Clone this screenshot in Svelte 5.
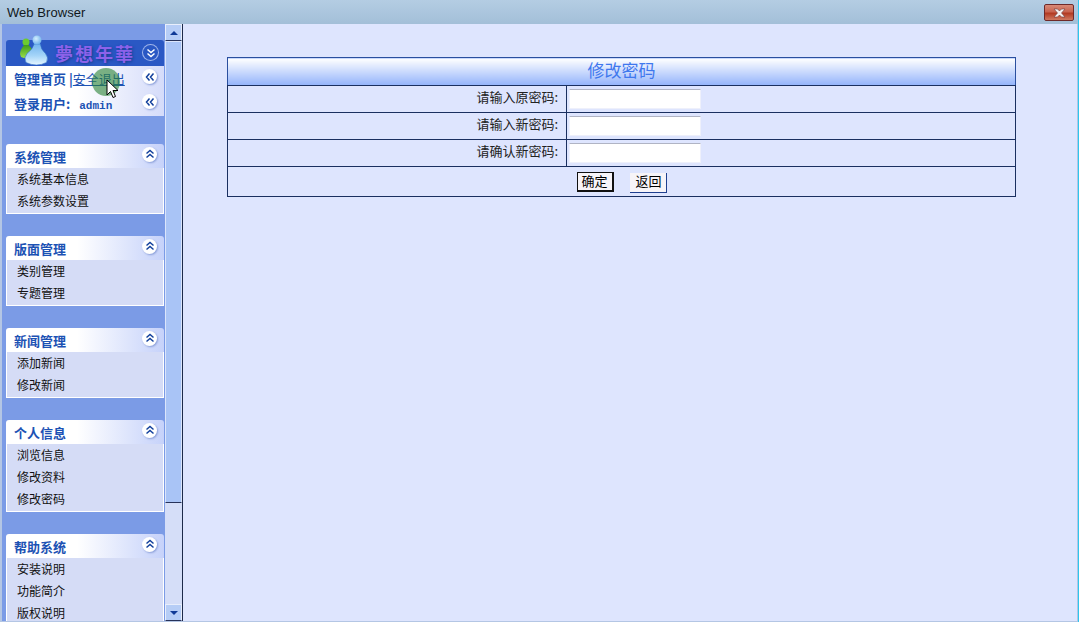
<script lang="ts">
  const groups = [
    { title: '系统管理', items: ['系统基本信息', '系统参数设置'] },
    { title: '版面管理', items: ['类别管理', '专题管理'] },
    { title: '新闻管理', items: ['添加新闻', '修改新闻'] },
    { title: '个人信息', items: ['浏览信息', '修改资料', '修改密码'] },
    { title: '帮助系统', items: ['安装说明', '功能简介', '版权说明'] },
  ]
  const fields = ['请输入原密码:', '请输入新密码:', '请确认新密码:']
</script>

{#snippet chevron(dir: string)}
  <span class="chev">
    <svg width="10" height="10" viewBox="0 0 10 10" fill="none" stroke="#12409c" stroke-width="1.5">
      {#if dir === 'left'}
        <path d="M4.5 1.5 1.5 5l3 3.5M8.5 1.5 5.5 5l3 3.5" />
      {:else if dir === 'up'}
        <path d="M1.5 4.5 5 1.5l3.5 3M1.5 8.5 5 5.5l3.5 3" />
      {/if}
    </svg>
  </span>
{/snippet}

<div class="window">
  <header class="titlebar">
    <span class="title">Web Browser</span>
    <button class="close" aria-label="close">
      <svg width="13" height="10" viewBox="0 0 13 10">
        <path d="M1 1h3.500L6.500 3l2-2H12L8.500 5 12 9H8.500l-2-2-2 2H1l3.500-4z" fill="#f4f0f0" stroke="#6b3a3a" stroke-width=".6" />
      </svg>
    </button>
  </header>

  <div class="body">
    <aside class="sidebar">
      <div class="menu">
        <div class="logo">
          <svg class="msn" width="32" height="32" viewBox="0 0 32 32">
            <defs>
              <linearGradient id="blueman" x1="0" y1="0" x2="0" y2="1">
                <stop offset="0" stop-color="#72b4ee" />
                <stop offset=".55" stop-color="#a4d4f8" />
                <stop offset="1" stop-color="#e6f6ff" />
              </linearGradient>
              <linearGradient id="greenman" x1="0" y1="0" x2="0" y2="1">
                <stop offset="0" stop-color="#3f9c18" />
                <stop offset="1" stop-color="#9be04c" />
              </linearGradient>
              <radialGradient id="bluehead" cx=".4" cy=".35" r=".7">
                <stop offset="0" stop-color="#d4eefe" />
                <stop offset="1" stop-color="#68aeea" />
              </radialGradient>
            </defs>
            <circle cx="7" cy="7" r="3.500" fill="#6ccb30" />
            <path d="M5 10h4.500L13 14l-2 9q-5 1-9-1l-1-3q0-4 4-9z" fill="url(#greenman)" />
            <path d="M15 9h6.500q0 5 5 9.500 3.500 4 1 9-10 5-20.500 0-2.500-5 1-9 6-4.500 7-9.500z" fill="url(#blueman)" stroke="#2f6fc4" stroke-width=".6" />
            <circle cx="18" cy="5" r="4.500" fill="url(#bluehead)" />
          </svg>
          <span class="logo-text">夢想年華</span>
          <span class="chev ring">
            <svg width="10" height="10" viewBox="0 0 10 10" fill="none" stroke="#fff" stroke-width="1.500">
              <path d="M1.500 1.500 5 4.500l3.500-3M1.500 5.500 5 8.500l3.500-3" />
            </svg>
          </span>
        </div>
        <div class="user-row first">
          <span class="links">管理首页 |<span class="logout">安全退出</span></span>
          {@render chevron('left')}
        </div>
        <div class="user-row">
          <span class="login">登录用户:<span class="name">admin</span></span>
          {@render chevron('left')}
        </div>

        {#each groups as group}
          <section class="group">
            <div class="group-head">
              <span>{group.title}</span>
              {@render chevron('up')}
            </div>
            <ul>
              {#each group.items as item}
                <li>{item}</li>
              {/each}
            </ul>
          </section>
        {/each}
      </div>

      <div class="scrollbar">
        <div class="sb-btn"><i class="arrow up"></i></div>
        <div class="sb-thumb"></div>
        <div class="sb-track"></div>
        <div class="sb-btn"><i class="arrow down"></i></div>
      </div>
    </aside>

    <main class="content">
      <table>
        <thead>
          <tr><th colspan="2">修改密码</th></tr>
        </thead>
        <tbody>
          {#each fields as field}
            <tr>
              <td class="label">{field}</td>
              <td class="value"><input type="password" /></td>
            </tr>
          {/each}
          <tr>
            <td class="actions" colspan="2">
              <button class="btn primary">确定</button>
              <button class="btn">返回</button>
            </td>
          </tr>
        </tbody>
      </table>
    </main>
  </div>

  <div class="click-dot"></div>
  <svg class="cursor" width="14" height="21" viewBox="0 0 14 21">
    <path d="M1 1v15l3.500-3.500 2.500 6 2.500-1-2.500-6h5z" fill="#fff" stroke="#000" stroke-width="1" />
  </svg>
</div>

<style>
  :global(body) {
    margin: 0;
    overflow: hidden;
  }

  .window {
    position: relative;
    width: 1079px;
    height: 622px;
    box-sizing: border-box;
    border-right: 1px solid #2fc5ee;
    display: flex;
    flex-direction: column;
    overflow: hidden;
    background: #b4c6e4;
    font-family: "Noto Sans CJK SC", "Liberation Sans", sans-serif;
    font-size: 13px;
  }

  .titlebar {
    height: 24px;
    flex: none;
    display: flex;
    align-items: flex-start;
    justify-content: space-between;
    padding: 0 4px 0 7px;
    background: linear-gradient(#b4cde3, #a3bfd8);
  }

  .title {
    font-family: "Liberation Sans", sans-serif;
    font-size: 13px;
    letter-spacing: 0.05px;
    line-height: 26px;
    color: #101820;
  }

  .close {
    width: 30px;
    height: 17px;
    margin-top: 4px;
    padding: 0;
    border: 1px solid #6e2a2a;
    border-radius: 2px;
    display: flex;
    align-items: center;
    justify-content: center;
    background: linear-gradient(#d88a78 0, #c86450 45%, #b23a22 55%, #cf7a62 100%);
  }

  .body {
    flex: 1;
    min-height: 0;
    display: flex;
    margin: 0 1px 1px 2px;
  }

  .sidebar {
    width: 181px;
    flex: none;
    display: flex;
    overflow: hidden;
    background: #7b9be6;
  }

  .menu {
    width: 163px;
    flex: none;
    padding: 16px 1px 0 4px;
    box-sizing: border-box;
  }

  .logo {
    height: 26px;
    display: flex;
    align-items: center;
    position: relative;
    background: #2a58c4;
    border-radius: 3px 3px 0 0;
  }

  .msn {
    position: absolute;
    left: 13px;
    top: -5px;
    z-index: 1;
  }

  .logo-text {
    margin-left: 49px;
    font-family: "Noto Sans CJK TC", serif;
    font-size: 18px;
    font-weight: 700;
    letter-spacing: 2px;
    color: #8c62ea;
    text-shadow: 1px 1px 3px #17388f;
    white-space: nowrap;
  }

  .chev {
    width: 15px;
    height: 15px;
    flex: none;
    display: flex;
    align-items: center;
    justify-content: center;
    background: #fff;
    border-radius: 50%;
    box-shadow: 1px 1px 2px #8a9ed8;
  }

  .chev.ring {
    position: absolute;
    right: 6px;
    top: 5px;
    background: #2a58c4;
    box-shadow: 0 0 0 1px #9fb4ea;
  }

  .user-row {
    height: 24px;
    box-sizing: border-box;
    display: flex;
    align-items: center;
    justify-content: space-between;
    padding: 0 7px 2px 8px;
    background: linear-gradient(90deg, #fff 0, #fff 45%, #d5dcfa 100%);
    color: #1c52b4;
    font-weight: 700;
    white-space: nowrap;
  }

  .user-row.first {
    height: 26px;
  }

  .user-row .chev {
    margin-top: -3px;
  }

  .logout {
    font-weight: 400;
    text-decoration: underline;
  }

  .name {
    margin-left: 9px;
    font-family: "Liberation Mono", monospace;
    font-size: 11px;
    font-weight: 700;
  }

  .group {
    margin-top: 22px;
  }

  .user-row + .group {
    margin-top: 28px;
  }

  .group-head {
    height: 24px;
    box-sizing: border-box;
    display: flex;
    align-items: center;
    justify-content: space-between;
    padding: 0 7px 0 8px;
    background: linear-gradient(90deg, #fff 0, #fff 45%, #c6d2fa 100%);
    border-radius: 3px 3px 0 0;
    color: #1c52b4;
    font-weight: 700;
  }

  .group-head .chev {
    margin-top: -4px;
  }

  ul {
    list-style: none;
    margin: 0;
    padding: 0 0 1px;
    background: #d5dcf6;
    border: 1px solid #fff;
    border-width: 0 1px 1px;
  }

  li {
    height: 22px;
    line-height: 22px;
    padding-left: 10px;
    color: #111;
    font-size: 12px;
  }

  .scrollbar {
    width: 18px;
    flex: none;
    display: flex;
    flex-direction: column;
    border-right: 1px solid #1d2a4a;
    box-sizing: border-box;
  }

  .sb-btn {
    height: 17px;
    flex: none;
    display: flex;
    align-items: center;
    justify-content: center;
    background: #b6cdf6;
    border: 1px solid #e8eefc;
    border-bottom-color: #27325a;
    box-sizing: border-box;
  }

  .arrow {
    width: 0;
    height: 0;
    border-left: 4px solid transparent;
    border-right: 4px solid transparent;
  }

  .arrow.up {
    border-bottom: 4px solid #103a96;
  }

  .arrow.down {
    border-top: 4px solid #103a96;
  }

  .sb-thumb {
    height: 462px;
    flex: none;
    background: #a9c4f6;
    border: 1px solid #dbe5fb;
    border-bottom-color: #27325a;
    box-sizing: border-box;
  }

  .sb-track {
    flex: 1;
    background: #d5def8;
  }

  .content {
    flex: 1;
    background: #dee5fe;
    padding: 33px 0 0 44px;
  }

  table {
    width: 789px;
    border-collapse: collapse;
    border: 1px solid #2a4f9f;
    font-size: 13px;
  }

  th {
    height: 27px;
    padding: 0;
    vertical-align: top;
    line-height: 23px;
    background: linear-gradient(#fff, #93b3fb);
    color: #3f78ee;
    font-size: 17px;
    font-weight: 400;
  }

  td {
    height: 26px;
    padding: 0;
    border: 1px solid #1a2f60;
    color: #222;
  }

  .label {
    width: 330px;
    padding-right: 8px;
    text-align: right;
    vertical-align: top;
    line-height: 22px;
  }

  .value {
    padding-left: 2px;
  }

  input {
    display: block;
    width: 132px;
    height: 20px;
    padding: 0;
    box-sizing: border-box;
    border: 1px solid #eef0fb;
    border-top-color: #b0b4c4;
    background: #fff;
  }

  .actions {
    height: 29px;
    text-align: center;
  }

  .btn {
    width: 37px;
    height: 20px;
    margin: 0 5px 0 8px;
    padding: 0 0 4px;
    box-sizing: border-box;
    background: #f7f4f8;
    border: 0;
    border-right: 1px solid #1f3f8f;
    border-bottom: 1px solid #1f3f8f;
    font: 13px "Noto Sans CJK SC", sans-serif;
    line-height: 15px;
    color: #000;
  }

  .btn.primary {
    margin: 0 6px;
    border: 1px solid #111;
    border-right-width: 2px;
    border-bottom-width: 2px;
    padding-bottom: 3px;
  }

  .click-dot {
    position: absolute;
    left: 92px;
    top: 68px;
    width: 28px;
    height: 28px;
    border-radius: 50%;
    background: rgba(40, 130, 50, 0.6);
  }

  .cursor {
    position: absolute;
    left: 106px;
    top: 79px;
  }
</style>
